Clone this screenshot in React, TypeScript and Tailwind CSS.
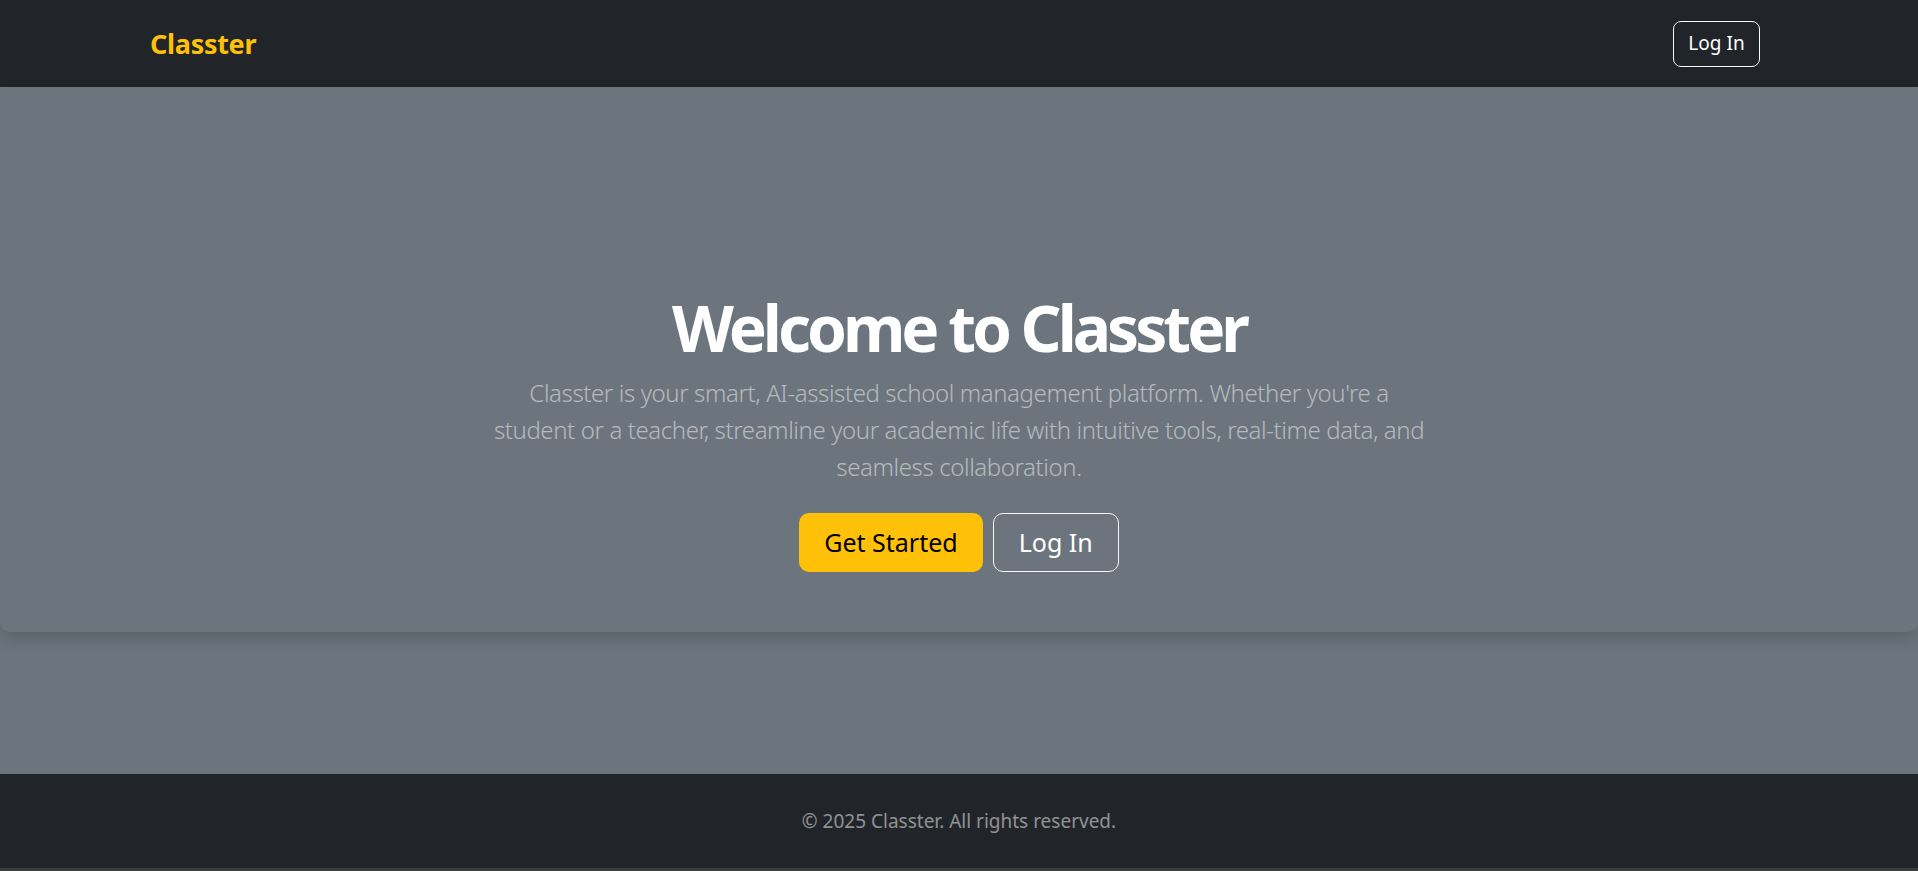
export default function App() {
  return (
    <div
      className="min-h-screen flex flex-col bg-[#6c757d]"
      style={{ fontFamily: '"Noto Sans", "Open Sans", sans-serif' }}
    >
      {/* Navbar */}
      <header className="bg-[#212529] h-[87px] flex items-center justify-between pl-[150px] pr-[158px]">
        <a href="#" className="text-[#ffc107] text-[27px] font-bold leading-none tracking-[-0.3px]">
          Classter
        </a>
        <button className="h-[46px] w-[87px] rounded-[8px] border border-[#f8f9fa] text-white text-[19px]">
          Log In
        </button>
      </header>

      {/* Hero */}
      <section className="bg-[#6c757d] rounded-b-[10px] shadow-[0_8px_16px_rgba(0,0,0,0.15)] pt-[199px] pb-[60px] flex flex-col items-center text-center">
        <h1 className="text-white font-bold text-[64px] leading-[84px] tracking-[-4px]">Welcome to Classter</h1>
        <p className="mt-[4px] text-white/50 font-light text-[24px] leading-[37px] tracking-[-0.4px]">
          Classter is your smart, AI-assisted school management platform. Whether you're a
          <br />
          student or a teacher, streamline your academic life with intuitive tools, real-time data, and
          <br />
          seamless collaboration.
        </p>
        <div className="mt-[28px] flex gap-[10px]">
          <button className="h-[59px] px-[25px] rounded-[10px] bg-[#ffc107] text-black text-[25px]">
            Get Started
          </button>
          <button className="h-[59px] px-[25px] rounded-[10px] border border-[#f8f9fa] text-white text-[25px]">
            Log In
          </button>
        </div>
      </section>

      <div className="flex-1" />

      {/* Footer */}
      <footer className="bg-[#212529] h-[97px] flex flex-col">
        <div className="flex-1 flex items-center justify-center">
          <p className="text-white/50 text-[19px]">© 2025 Classter. All rights reserved.</p>
        </div>
        <div className="h-[3px] bg-[#3c3c3c]" />
      </footer>
    </div>
  );
}
